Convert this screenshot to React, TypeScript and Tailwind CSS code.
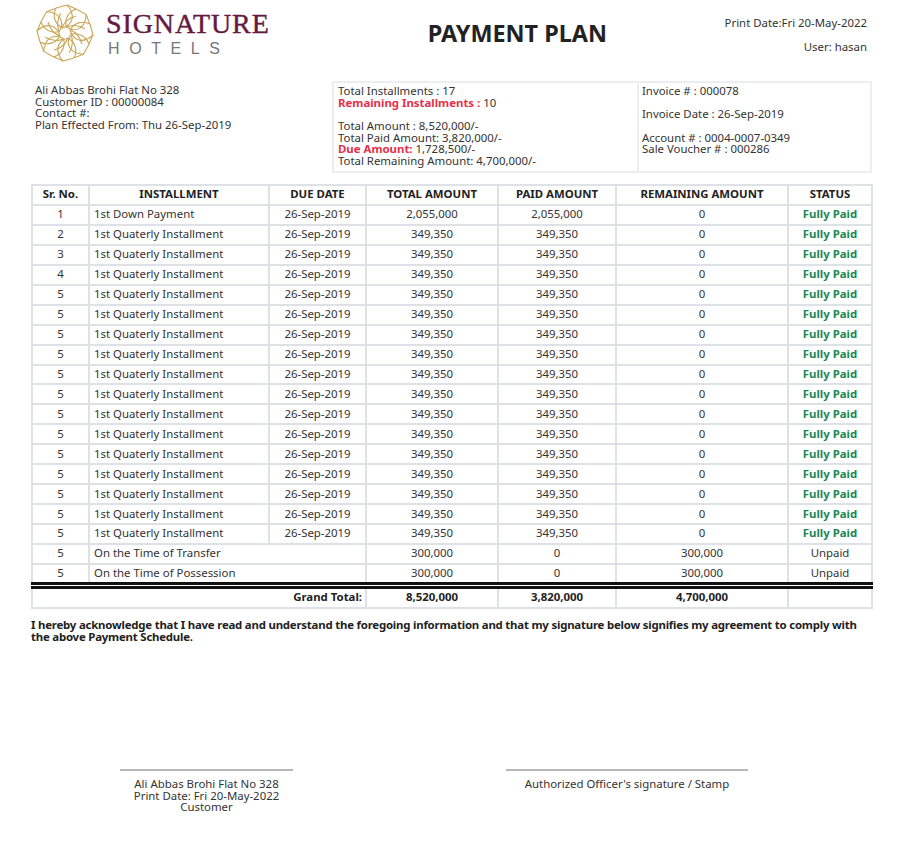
const rows = [
  ["1", "1st Down Payment", "2,055,000", "2,055,000"],
  ["2", "1st Quaterly Installment", "349,350", "349,350"],
  ["3", "1st Quaterly Installment", "349,350", "349,350"],
  ["4", "1st Quaterly Installment", "349,350", "349,350"],
  ...Array.from({ length: 13 }, () => ["5", "1st Quaterly Installment", "349,350", "349,350"]),
];

const cell = "border-2 border-[#dee2e6] p-0 pb-[2px] text-center align-middle";
const footCell = "border-2 border-t-[3px] border-[#dee2e6] border-t-[#111] pb-[3px] text-center font-bold text-[#222]";
const heads = ["Sr. No.", "INSTALLMENT", "DUE DATE", "TOTAL AMOUNT", "PAID AMOUNT", "REMAINING AMOUNT", "STATUS"];
const lastCell = "border-b-[3px] border-b-[#111]";

function Logo() {
  const angles = [0, 45, 90, 135, 180, 225, 270, 315];
  return (
    <div className="flex items-start">
      <svg width="60" height="60" viewBox="0 0 60 60" fill="none" stroke="#c9a656" strokeWidth="1.1" strokeLinejoin="round">
        {angles.map((a) => (
          <g key={a} transform={`rotate(${a} 30 30)`}>
            <path d="M21 5L32 2L41 6" />
            <path d="M32 2C41 12 38 22 27 25" />
            <path d="M21 5C17 13 20 21 27 25" />
            <path d="M27 25C29 19 34 15 41 13" />
          </g>
        ))}
      </svg>
      <div className="ml-[11px] flex flex-col">
        <span className="mt-[6px] whitespace-nowrap font-['Liberation_Serif',serif] text-[28px] leading-[30px] tracking-[0.9px] text-[#651a41] [-webkit-text-stroke:0.4px_#651a41]">SIGNATURE</span>
        <span className="ml-[2px] mt-[1px] font-['Liberation_Sans',sans-serif] text-[16px] leading-[18px] tracking-[9.6px] text-[#77777a]">HOTELS</span>
      </div>
    </div>
  );
}

export default function App() {
  return (
    <div className="h-[857px] w-[898px] bg-white font-['Noto_Sans',sans-serif] text-[11.4px] leading-[11.5px] text-[#333]">
      <header className="flex h-[81px] items-start">
        <div className="ml-[35px] mt-[3px]">
          <Logo />
        </div>
        <h1 className="ml-[158px] mt-[20px] whitespace-nowrap text-[23.4px] font-bold leading-[26px] text-[#222]">PAYMENT PLAN</h1>
        <div className="ml-auto mr-[31px] mt-[17px] text-right leading-[12px]">
          <p>Print Date:Fri 20-May-2022</p>
          <p className="mt-[12px]">User: hasan</p>
        </div>
      </header>

      <section className="flex h-[92px] items-start">
        <div className="ml-[35px] mt-[3px] w-[297px]">
          <p>Ali Abbas Brohi Flat No 328</p>
          <p>Customer ID : 00000084</p>
          <p>Contact #:</p>
          <p>Plan Effected From: Thu 26-Sep-2019</p>
        </div>
        <div className="flex h-[92px] w-[540px] border-2 border-[#eceef1]">
          <div className="w-[305px] border-r-2 border-[#eceef1] pl-[4px] pt-[2.4px]">
            <p>Total Installments : 17</p>
            <p><b className="text-[#e6304a]">Remaining Installments :</b> 10</p>
            <p className="mt-[12px]">Total Amount : 8,520,000/-</p>
            <p>Total Paid Amount: 3,820,000/-</p>
            <p><b className="text-[#e6304a]">Due Amount:</b> 1,728,500/-</p>
            <p>Total Remaining Amount: 4,700,000/-</p>
          </div>
          <div className="pl-[3px] pt-[2px]">
            <p>Invoice # : 000078</p>
            <p className="mt-[11.5px]">Invoice Date : 26-Sep-2019</p>
            <p className="mt-[12px]">Account # : 0004-0007-0349</p>
            <p>Sale Voucher # : 000286</p>
          </div>
        </div>
      </section>

      <table className="ml-[31px] mt-[11px] w-[840px] table-fixed border-collapse leading-[15px]">
        <colgroup>
          <col className="w-[57px]" />
          <col className="w-[180px]" />
          <col className="w-[97px]" />
          <col className="w-[132px]" />
          <col className="w-[118px]" />
          <col className="w-[172px]" />
          <col className="w-[84px]" />
        </colgroup>
        <thead>
          <tr className="h-[20px]">
            {heads.map((h) => (
              <th key={h} className={`${cell} !pb-[3px] font-bold text-[#222]`}>{h}</th>
            ))}
          </tr>
        </thead>
        <tbody>
          {rows.map((r, i) => (
            <tr key={i} className="h-[19.94px]">
              <td className={cell}>{r[0]}</td>
              <td className={`${cell} pl-[4px] !text-left`}>{r[1]}</td>
              <td className={cell}>26-Sep-2019</td>
              <td className={cell}>{r[2]}</td>
              <td className={cell}>{r[3]}</td>
              <td className={cell}>0</td>
              <td className={`${cell} font-bold text-[#198754]`}>Fully Paid</td>
            </tr>
          ))}
          <tr className="h-[19.94px]">
            <td className={cell}>5</td>
            <td colSpan={2} className={`${cell} pl-[4px] !text-left`}>On the Time of Transfer</td>
            <td className={cell}>300,000</td>
            <td className={cell}>0</td>
            <td className={cell}>300,000</td>
            <td className={cell}>Unpaid</td>
          </tr>
          <tr className="h-[20px]">
            <td className={`${cell} ${lastCell}`}>5</td>
            <td colSpan={2} className={`${cell} ${lastCell} pl-[4px] !text-left`}>On the Time of Possession</td>
            <td className={`${cell} ${lastCell}`}>300,000</td>
            <td className={`${cell} ${lastCell}`}>0</td>
            <td className={`${cell} ${lastCell}`}>300,000</td>
            <td className={`${cell} ${lastCell}`}>Unpaid</td>
          </tr>
          <tr>
            <td colSpan={7} className="border-x-0 p-0">
              <div className="h-[1px]"></div>
            </td>
          </tr>
          <tr className="h-[19px]">
            <td colSpan={3} className={`${footCell} pr-[3px] !text-right`}>Grand Total:</td>
            <td className={footCell}>8,520,000</td>
            <td className={footCell}>3,820,000</td>
            <td className={footCell}>4,700,000</td>
            <td className={footCell}></td>
          </tr>
        </tbody>
      </table>

      <p className="ml-[31px] mt-[10px] w-[841px] font-bold leading-[12px] tracking-[-0.2px] text-[#222]">
        I hereby acknowledge that I have read and understand the foregoing information and that my signature below signifies my agreement to comply with the above Payment Schedule.
      </p>

      <div className="mt-[126px] flex items-start">
        <div className="ml-[120px] w-[173px] border-t-2 border-[#b8b8b8] pt-[7px] text-center">
          <p>Ali Abbas Brohi Flat No 328</p>
          <p>Print Date: Fri 20-May-2022</p>
          <p>Customer</p>
        </div>
        <div className="ml-[213px] w-[242px] border-t-2 border-[#b8b8b8] pt-[7px] text-center">
          <p>Authorized Officer's signature / Stamp</p>
        </div>
      </div>
    </div>
  );
}
